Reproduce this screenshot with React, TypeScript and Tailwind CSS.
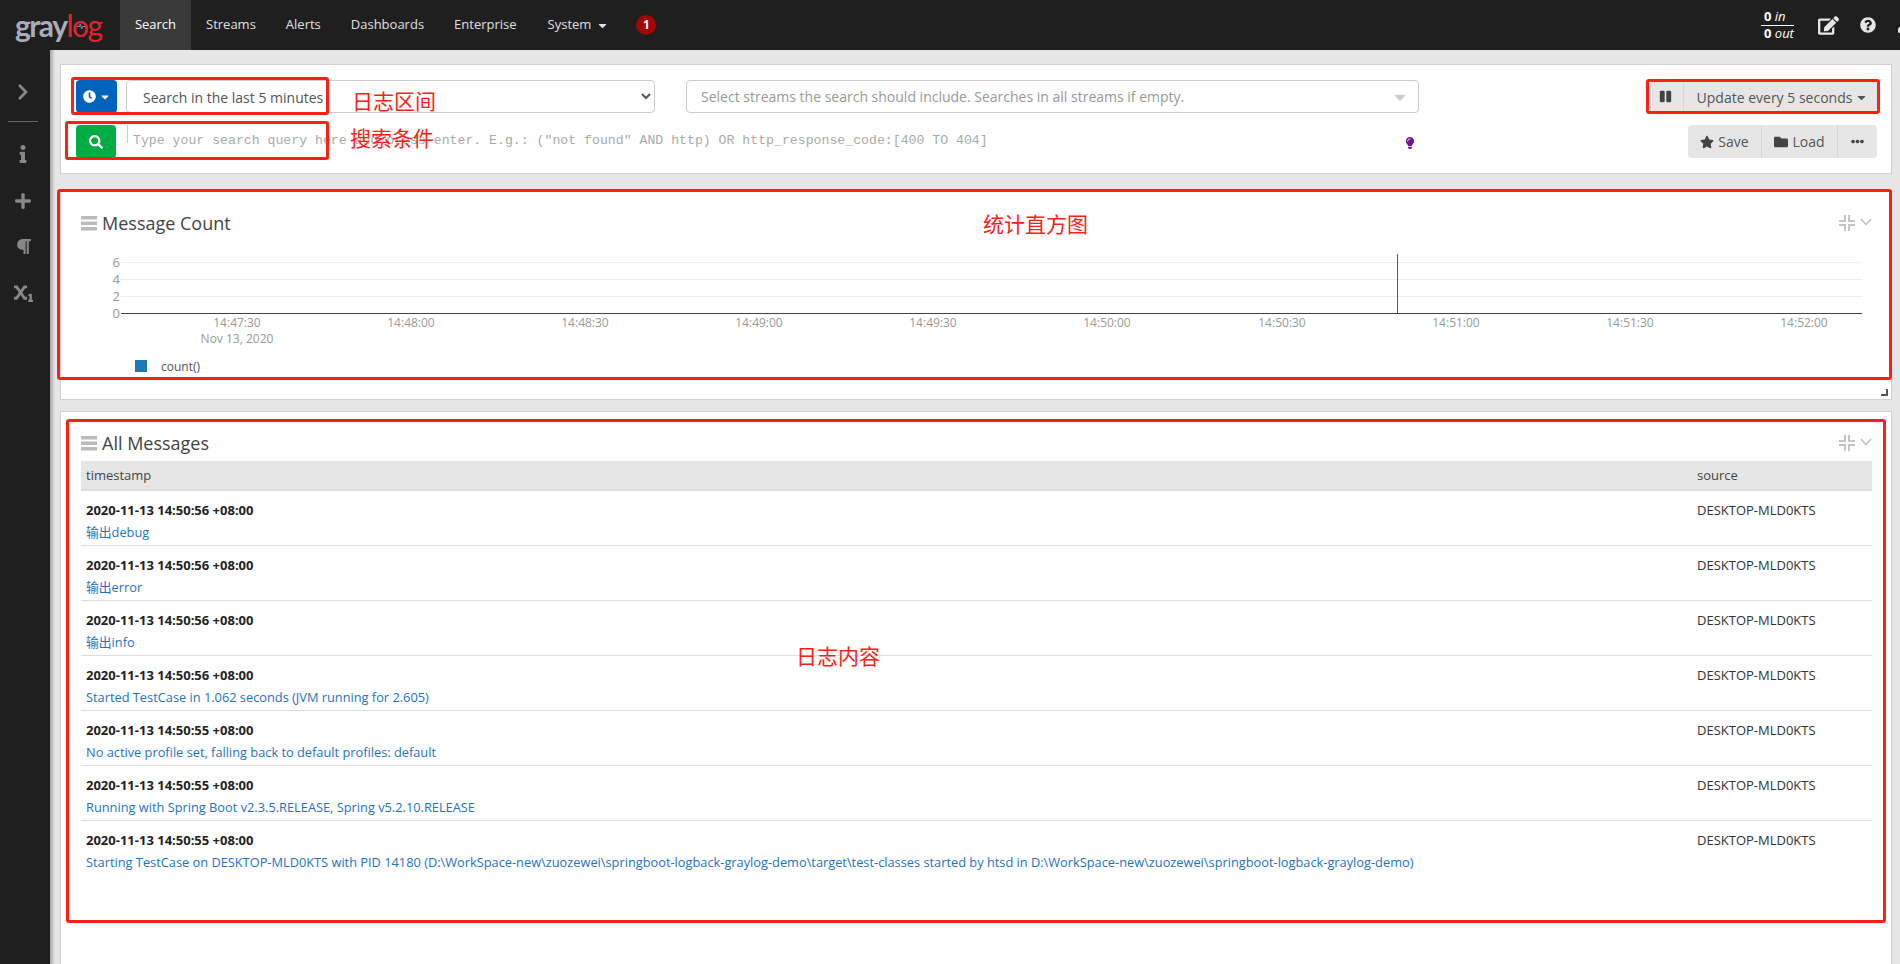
import { FaCaretDown, FaChevronRight, FaClock, FaEdit, FaEllipsisH, FaFolder, FaInfo, FaLightbulb, FaParagraph, FaPause, FaPlus, FaQuestionCircle, FaSearch, FaStar, FaSubscript, FaUser } from "react-icons/fa";

const navItems = [
  { label: "Streams", cls: "ml-[15px]" },
  { label: "Alerts", cls: "ml-[30px]" },
  { label: "Dashboards", cls: "ml-[30px]" },
  { label: "Enterprise", cls: "ml-[30px]" },
];

const messages = [
  { time: "2020-11-13 14:50:56 +08:00", text: "输出debug" },
  { time: "2020-11-13 14:50:56 +08:00", text: "输出error" },
  { time: "2020-11-13 14:50:56 +08:00", text: "输出info" },
  { time: "2020-11-13 14:50:56 +08:00", text: "Started TestCase in 1.062 seconds (JVM running for 2.605)" },
  { time: "2020-11-13 14:50:55 +08:00", text: "No active profile set, falling back to default profiles: default" },
  { time: "2020-11-13 14:50:55 +08:00", text: "Running with Spring Boot v2.3.5.RELEASE, Spring v5.2.10.RELEASE" },
  {
    time: "2020-11-13 14:50:55 +08:00",
    text: "Starting TestCase on DESKTOP-MLD0KTS with PID 14180 (D:\\WorkSpace-new\\zuozewei\\springboot-logback-graylog-demo\\target\\test-classes started by htsd in D:\\WorkSpace-new\\zuozewei\\springboot-logback-graylog-demo)",
  },
];

const ticks = [
  { x: 237, label: "14:47:30" },
  { x: 411, label: "14:48:00" },
  { x: 585, label: "14:48:30" },
  { x: 759, label: "14:49:00" },
  { x: 933, label: "14:49:30" },
  { x: 1107, label: "14:50:00" },
  { x: 1282, label: "14:50:30" },
  { x: 1456, label: "14:51:00" },
  { x: 1630, label: "14:51:30" },
  { x: 1804, label: "14:52:00" },
];

function WidgetControls() {
  return (
    <div className="flex items-center gap-[5px]">
      <svg width="16" height="16" viewBox="0 0 16 16" fill="none" stroke="#c4c4c4" strokeWidth="2">
        <path d="M6 0v6H0M10 0v6h6M6 16v-6H0M10 16v-6h6" />
      </svg>
      <svg width="12" height="8" viewBox="0 0 12 8" fill="none" stroke="#c4c4c4" strokeWidth="1.6" className="mb-[2px]">
        <path d="M1 1l5 5.5L11 1" />
      </svg>
    </div>
  );
}

function WidgetTitle({ title }: { title: string }) {
  return (
    <div className="flex h-6 items-center justify-between pr-[19px]">
      <div className="flex items-center gap-[5px] text-[18px] text-[#444]">
        <svg width="16" height="15" viewBox="0 0 16 15" fill="#bbbbbb">
          <rect y="0" width="16" height="3.5" />
          <rect y="5.5" width="16" height="3.5" />
          <rect y="11" width="16" height="3.5" />
        </svg>
        {title}
      </div>
      <WidgetControls />
    </div>
  );
}

function Chart() {
  return (
    <svg width="1830" height="140" viewBox="61 245 1830 140" className="block" fontFamily="'Open Sans', sans-serif">
      {[262, 279, 296].map((y) => (
        <line key={y} x1="121" x2="1862" y1={y + 0.5} y2={y + 0.5} stroke="#eeeeee" />
      ))}
      {[{ y: 262, v: "6" }, { y: 279, v: "4" }, { y: 296, v: "2" }, { y: 313, v: "0" }].map((t) => (
        <text key={t.v} x="120" y={t.y + 5} textAnchor="end" fontSize="13" fill="#999">
          {t.v}
        </text>
      ))}
      <line x1="1397.5" x2="1397.5" y1="254" y2="313" stroke="#1f6ba8" />
      <line x1="121" x2="1862" y1="313.5" y2="313.5" stroke="#444" />
      {ticks.map((t) => (
        <text key={t.x} x={t.x} y="327" textAnchor="middle" fontSize="12" fill="#999">
          {t.label}
        </text>
      ))}
      <text x="237" y="343" textAnchor="middle" fontSize="12" fill="#999">
        Nov 13, 2020
      </text>
      <rect x="135" y="360" width="12" height="12" fill="#1f77b4" />
      <text x="161" y="371" fontSize="12" fill="#555">
        count()
      </text>
    </svg>
  );
}

export default function App() {
  return (
    <div className="relative flex h-screen flex-col overflow-hidden bg-[#e6e6e6] font-['Open_Sans','Noto_Sans_CJK_SC',sans-serif] text-[13px] text-[#333]">
      <header className="flex h-[50px] shrink-0 items-center bg-[#1f1f1f] text-[13px] text-[#e0e0e0]">
        <div className="flex w-[120px] justify-start pl-[15px]">
          <span className="relative font-['Lato',sans-serif] text-[30px] font-bold leading-none tracking-[-1.5px] text-[#a9adb9]">
            gray<span className="font-normal text-[#e3242f]">log</span>
            <svg width="8" height="7" viewBox="0 0 10 8" fill="none" stroke="#a9adb9" strokeWidth="1" className="absolute left-[62px] top-[13px]">
              <path d="M0 4h3l1-3 2 6 1-3h3" />
            </svg>
          </span>
        </div>
        <div className="flex h-full w-[71px] items-center justify-center bg-[#393939] text-white">Search</div>
        {navItems.map((n) => (
          <span key={n.label} className={n.cls}>
            {n.label}
          </span>
        ))}
        <span className="ml-[31px] flex items-center gap-[5px]">
          System
          <FaCaretDown className="text-[13px]" />
        </span>
        <span className="ml-[27px] flex h-[20px] w-[20px] items-center justify-center rounded-full bg-[#a30606] text-[12px] font-bold text-white">1</span>
        <div className="ml-auto flex items-center">
          <div className="w-[33px] text-[13px] italic leading-[15px] text-white">
            <div className="border-b border-white pb-px pl-[3px]">
              <b className="not-italic">0</b> in
            </div>
            <div className="pl-[3px]">
              <b className="not-italic">0</b> out
            </div>
          </div>
          <FaEdit className="ml-[24px] text-[21px] text-[#e6e6e6]" />
          <FaQuestionCircle className="ml-[21px] text-[16px] text-[#e6e6e6]" />
          <FaUser className="ml-[21px] mr-[-13px] text-[16px] text-[#e6e6e6]" />
        </div>
      </header>

      <div className="flex min-h-0 flex-1">
        <aside className="flex w-[50px] shrink-0 flex-col items-center bg-[#1f1f1f] pr-[4px] pt-[33px] text-[#888]">
          <FaChevronRight className="text-[18px]" />
          <div className="mt-[20px] h-px w-[30px] bg-[#666]" />
          <FaInfo className="mt-[23px] text-[18px]" />
          <FaPlus className="mt-[29px] text-[18px]" />
          <FaParagraph className="mt-[28px] text-[17px]" />
          <FaSubscript className="mt-[28px] text-[19px]" />
        </aside>

        <main className="flex min-w-0 flex-1">
          <div className="w-[5px] shrink-0 bg-gradient-to-r from-[#a6a6a6] to-[#e6e6e6]" />
          <div className="flex min-w-0 flex-1 flex-col pl-[5px] pr-[8px] pt-[14px]">
            <section className="h-[110px] shrink-0 border border-[#d1d1d1] bg-white pl-[15px] pr-[14px] pt-[15px]">
              <div className="flex h-[33px] items-stretch">
                <button className="flex w-[41px] items-center justify-center gap-[3px] rounded-[4px] bg-[#0063be] text-white">
                  <FaClock className="text-[13px]" />
                  <FaCaretDown className="text-[12px]" />
                </button>
                <select
                  defaultValue="5"
                  className="ml-[9px] w-[529px] rounded-[4px] border border-[#ccc] bg-white pl-[12px] pr-[4px] pt-[1px] text-[14px] text-[#555]"
                >
                  <option value="5">Search in the last 5 minutes</option>
                </select>
                <div className="ml-[31px] flex w-[733px] items-center justify-between rounded-[4px] border border-[#ccc] pl-[14px] pr-[9px] text-[14px] text-[#999]">
                  Select streams the search should include. Searches in all streams if empty.
                  <FaCaretDown className="text-[18px] text-[#ccc]" />
                </div>
                <div className="ml-auto flex w-[229px] text-[14px] text-[#555]">
                  <button className="flex w-[36px] items-center justify-center rounded-l-[4px] border-r border-[#d6d6d6] bg-[#e6e6e6]">
                    <FaPause className="text-[13px] text-[#444]" />
                  </button>
                  <button className="flex flex-1 items-center justify-center gap-[3px] rounded-r-[4px] bg-[#e6e6e6] pl-[4px] pt-[2px]">
                    Update every 5 seconds
                    <FaCaretDown className="text-[13px]" />
                  </button>
                </div>
              </div>

              <div className="mt-[12px] flex h-[33px] items-stretch">
                <button className="flex w-[40px] items-center justify-center rounded-[4px] bg-[#00ad45] text-white">
                  <FaSearch className="text-[14px]" />
                </button>
                <div className="ml-[11px] h-[18px] w-px bg-[#ccc]" />
                <input
                  readOnly
                  placeholder={'Type your search query here and press enter. E.g.: ("not found" AND http) OR http_response_code:[400 TO 404]'}
                  className="ml-[5px] h-[30px] min-w-0 flex-1 bg-transparent font-['Liberation_Mono',monospace] text-[13.2px] outline-none placeholder:text-[#aaa]"
                />
                <FaLightbulb className="ml-[272px] mr-[272px] mt-[12px] shrink-0 text-[12px] text-[#6f1d8e]" />
                <div className="flex w-[189px] shrink-0 text-[14px] text-[#555]">
                  <button className="flex w-[74px] items-center justify-center gap-[4px] rounded-l-[4px] border-r border-[#d6d6d6] bg-[#e6e6e6]">
                    <FaStar className="text-[14px] text-[#444]" />
                    Save
                  </button>
                  <button className="flex w-[76px] items-center justify-center gap-[4px] border-r border-[#d6d6d6] bg-[#e6e6e6]">
                    <FaFolder className="text-[14px] text-[#444]" />
                    Load
                  </button>
                  <button className="flex flex-1 items-center justify-center rounded-r-[4px] bg-[#e6e6e6]">
                    <FaEllipsisH className="text-[13px] text-[#444]" />
                  </button>
                </div>
              </div>
            </section>

            <section className="relative mt-[16px] h-[210px] shrink-0 border border-[#d1d1d1] bg-white pl-[20px] pt-[20px]">
              <WidgetTitle title="Message Count" />
              <div className="ml-[-20px] mt-[10px]">
                <Chart />
              </div>
              <svg width="7" height="7" viewBox="0 0 7 7" className="absolute bottom-[3px] right-[3px]" fill="none" stroke="#555" strokeWidth="2">
                <path d="M6 0v6H0" />
              </svg>
            </section>

            <section className="mt-[11px] min-h-0 flex-1 border-x border-t border-[#d1d1d1] bg-white pl-[20px] pt-[19px]">
              <WidgetTitle title="All Messages" />
              <table className="mt-[6px] w-[1791px] table-fixed">
                <thead>
                  <tr className="h-[29px] border-b-2 border-[#dcdcdc] bg-[#e6e6e6] text-left text-[#444]">
                    <th className="pl-[5px] pt-[1px] font-normal">timestamp</th>
                    <th className="w-[179px] pl-[4px] pt-[1px] font-normal">source</th>
                  </tr>
                </thead>
                <tbody>
                  {messages.map((m, idx) => (
                    <tr key={idx} className={idx === messages.length - 1 ? "" : "border-b border-[#ddd]"}>
                      <td className="pb-[4px] pl-[5px] pt-[11px] align-top leading-[17px]">
                        <div className="font-bold text-[#222]">{m.time}</div>
                        <div className="mt-[5px] whitespace-nowrap text-[12.8px] text-[#1f73c4]">{m.text}</div>
                      </td>
                      <td className="pl-[4px] pt-[11px] align-top leading-[17px]">DESKTOP-MLD0KTS</td>
                    </tr>
                  ))}
                </tbody>
              </table>
            </section>
          </div>
        </main>
      </div>

      {/* 截图上的红色标注 */}
      <div className="pointer-events-none absolute left-[71px] top-[77px] h-[38px] w-[258px] rounded-[3px] border-[3px] border-[#ff2015]" />
      <div className="pointer-events-none absolute left-[65px] top-[121px] h-[39px] w-[264px] rounded-[3px] border-[3px] border-[#ff2015]" />
      <div className="pointer-events-none absolute left-[1646px] top-[79px] h-[35px] w-[234px] rounded-[3px] border-[3px] border-[#ff2015]" />
      <div className="pointer-events-none absolute left-[57px] top-[189px] h-[191px] w-[1835px] rounded-[3px] border-[3px] border-[#ff2015]" />
      <div className="pointer-events-none absolute left-[66px] top-[419px] h-[504px] w-[1820px] rounded-[3px] border-[3px] border-[#ff2015]" />
      <span className="absolute left-[352px] top-[87px] text-[21px] leading-[28px] text-[#ff2015]">日志区间</span>
      <span className="absolute left-[350px] top-[124px] text-[21px] leading-[28px] text-[#ff2015]">搜索条件</span>
      <span className="absolute left-[983px] top-[210px] text-[21px] leading-[28px] text-[#ff2015]">统计直方图</span>
      <span className="absolute left-[796px] top-[642px] text-[21px] leading-[28px] text-[#ff2015]">日志内容</span>
    </div>
  );
}
